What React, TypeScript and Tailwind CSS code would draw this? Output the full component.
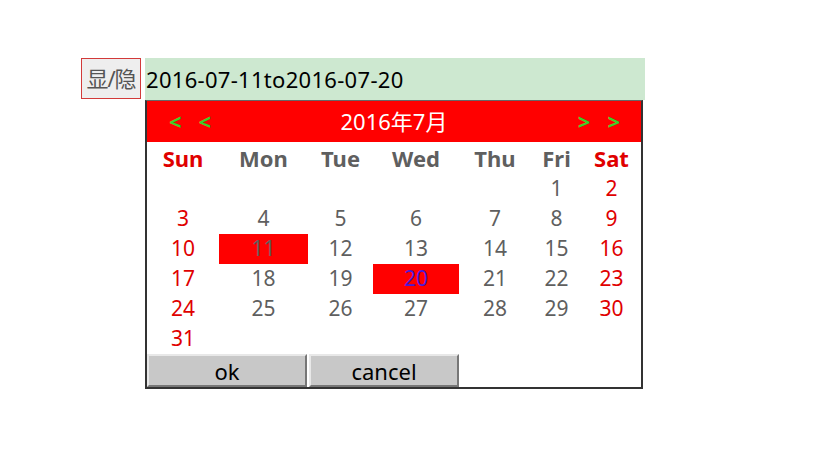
import React from 'react';

type Day = { n: number | null; w: number };

const cols = ['w-[72px]', 'w-[89px]', 'w-[65px]', 'w-[86px]', 'w-[72px]', 'w-[51px]', 'w-[59px]'];
const weekNames = ['Sun', 'Mon', 'Tue', 'Wed', 'Thu', 'Fri', 'Sat'];

function buildWeeks(): Day[][] {
  // July 2016 starts on a Friday
  const cells: (number | null)[] = [null, null, null, null, null];
  for (let d = 1; d <= 31; d++) cells.push(d);
  while (cells.length % 7) cells.push(null);
  const weeks: Day[][] = [];
  for (let i = 0; i < cells.length; i += 7) {
    weeks.push(cells.slice(i, i + 7).map((n, w) => ({ n, w })));
  }
  return weeks;
}

function DayCell({ day }: { day: Day }) {
  const weekend = day.w === 0 || day.w === 6;
  const start = day.n === 11;
  const end = day.n === 20;
  let color = weekend ? 'text-[#e00000]' : 'text-[#5f5f5f]';
  if (end) color = 'text-[#4a1ad8]';
  return (
    <div
      className={`${cols[day.w]} flex h-[30px] items-center justify-center ${color} ${
        start || end ? 'bg-[#ff0000]' : ''
      }`}
    >
      {day.n ?? ''}
    </div>
  );
}

export default function App() {
  const weeks = buildWeeks();

  return (
    <div
      className="h-[464px] w-[818px] bg-white pl-[81px] pt-[58px]"
      style={{ fontFamily: '"Noto Sans", "Noto Sans CJK SC", sans-serif' }}
    >
      <div className="flex items-start">
        <button className="flex h-[41px] w-[60px] items-center justify-center border border-[#d23a3a] bg-[#eeeeee] text-[22px] tracking-[-1px] text-[#555]">
          显/隐
        </button>
        <div className="ml-[4px] flex flex-col">
          <div className="flex h-[42px] w-[500px] items-center bg-[#cde8d0] pl-[1px] text-[22px] tracking-[0.3px] text-black">
            2016-07-11to2016-07-20
          </div>
          <div className="w-[498px] border-x-2 border-b-2 border-t border-x-[#333] border-b-[#333] border-t-[#666] bg-white">
            {/* title */}
            <div className="relative flex h-[41px] items-center justify-center bg-[#ff0000] text-[22px] text-white">
              <span>2016年7月</span>
              <div className="absolute left-[22px] top-0 flex h-full items-center gap-[17px] text-[22px] font-bold text-[#3ccf2a]">
                <span>&lt;</span>
                <span>&lt;</span>
              </div>
              <div className="absolute right-[21px] top-0 flex h-full items-center gap-[17px] text-[22px] font-bold text-[#3ccf2a]">
                <span>&gt;</span>
                <span>&gt;</span>
              </div>
            </div>

            {/* week names */}
            <div className="flex h-[32px] text-[22px] font-bold">
              {weekNames.map((n, i) => (
                <div
                  key={n}
                  className={`${cols[i]} flex items-center justify-center ${
                    i === 0 || i === 6 ? 'text-[#e00000]' : 'text-[#5f5f5f]'
                  }`}
                >
                  {n}
                </div>
              ))}
            </div>

            {weeks.map((week, i) => (
              <div key={i} className="flex text-[21px]">
                {week.map((day) => (
                  <DayCell key={day.w} day={day} />
                ))}
              </div>
            ))}

            <div className="flex h-[33px] gap-[2px] text-[22px] text-black">
              <button className="w-[160px] border-2 border-t-[#e8e8e8] border-l-[#e8e8e8] border-r-[#777] border-b-[#777] bg-[#c8c8c8] leading-none">
                ok
              </button>
              <button className="w-[150px] border-2 border-t-[#e8e8e8] border-l-[#e8e8e8] border-r-[#777] border-b-[#777] bg-[#c8c8c8] leading-none">
                cancel
              </button>
            </div>
          </div>
        </div>
      </div>
    </div>
  );
}
